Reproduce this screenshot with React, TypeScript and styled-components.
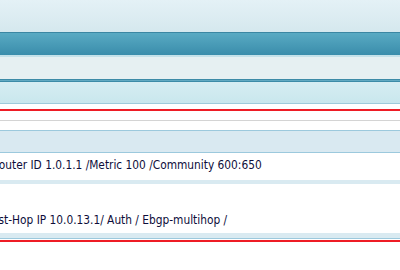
import styled, { createGlobalStyle } from 'styled-components';

const Global = createGlobalStyle`
  html, body { margin: 0; padding: 0; background: #ffffff; }
  body { font-family: "DejaVu Sans Condensed", "DejaVu Sans", Verdana, sans-serif; overflow: hidden; }
`;

const Page = styled.div`
  width: 400px;
  height: 270px;
  overflow: hidden;
  display: flex;
  flex-direction: column;
`;

const TopBand = styled.div`
  height: 32px;
  background: linear-gradient(#e4f1f6, #d5e8ee);
`;

const TitleBar = styled.div`
  height: 22px;
  border-top: 1px solid #3b87a3;
  background: linear-gradient(#59aac3, #3a8dab);
`;

const Gap = styled.div`
  height: 2px;
  background: #c4e1e9;
`;

const Toolbar = styled.div`
  height: 22px;
  background: #e6f0f2;
`;

const TripleRule = styled.div`
  height: 1px;
  border-top: 1px solid #3d8ba7;
  border-bottom: 1px solid #3d8ba7;
  background: #62a9c1;
`;

const SubHeader = styled.div`
  height: 21px;
  background: linear-gradient(#d6edf2, #c9e7ed);
  border-bottom: 1px solid #9fcadb;
`;

const Spacer = styled.div<{ h: number }>`
  height: ${p => p.h}px;
  background: #ffffff;
`;

const RedRule = styled.div`
  height: 2px;
  background: #ee1c25;
`;

const GreyRule = styled.div`
  height: 1px;
  background: #d4d4d4;
`;

const TableHead = styled.div`
  height: 21px;
  background: #d9e9f1;
  border-top: 1px solid #9cc9dd;
  border-bottom: 1px solid #9cc9dd;
`;

const Row = styled.div<{ h: number; top: number }>`
  height: ${p => p.h - p.top}px;
  padding-top: ${p => p.top}px;
  display: flex;
  align-items: flex-start;
  background: #ffffff;
`;

const Cell = styled.span<{ shift: number }>`
  font-size: 11.8px;
  line-height: 14px;
  color: #0d0d3a;
  white-space: nowrap;
  margin-left: ${p => p.shift}px;
`;

const Strip = styled.div<{ h: number }>`
  height: ${p => p.h}px;
  background: #d9eaf1;
`;

const FootRule = styled.div`
  height: 0;
  border-bottom: 1px solid #9cc9dd;
`;

export default function App() {
  return (
    <Page>
      <Global />
      <TopBand />
      <TitleBar />
      <Gap />
      <Toolbar />
      <TripleRule />
      <SubHeader />
      <Spacer h={5} />
      <RedRule />
      <Spacer h={9} />
      <GreyRule />
      <Spacer h={9} />
      <TableHead />
      <Row h={27} top={5}>
        <Cell shift={-8}>Router ID 1.0.1.1 /Metric 100 /Community 600:650</Cell>
      </Row>
      <Strip h={4} />
      <Row h={49} top={29}>
        <Cell shift={-14}>First-Hop IP 10.0.13.1/ Auth / Ebgp-multihop /</Cell>
      </Row>
      <Strip h={5} />
      <FootRule />
      <Spacer h={1} />
      <RedRule />
      <Spacer h={28} />
    </Page>
  );
}
